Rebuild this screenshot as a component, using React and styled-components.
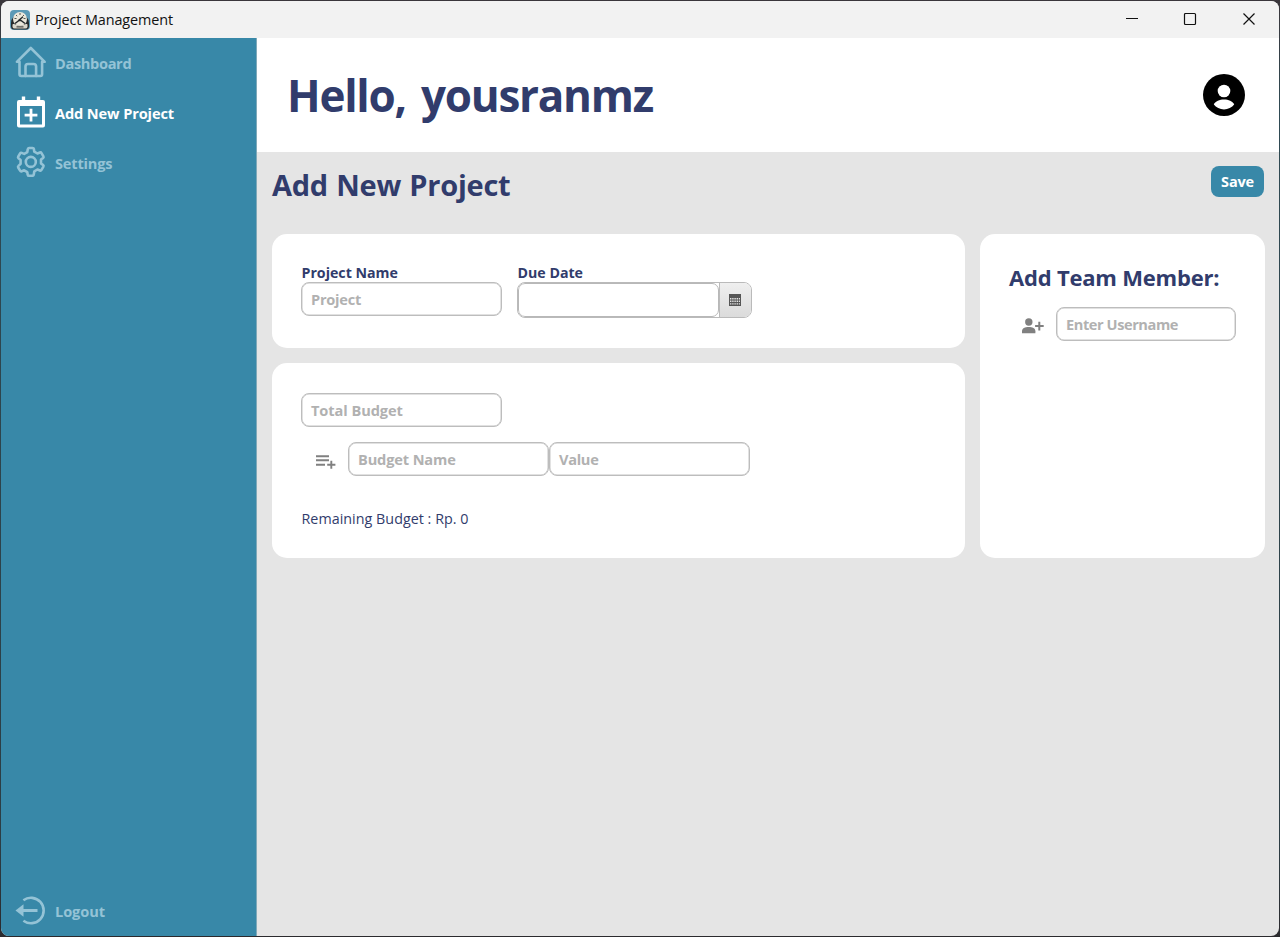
import React from "react";
import styled, { createGlobalStyle } from "styled-components";

const teal = "#3888a8";
const navy = "#313c6c";

const Global = createGlobalStyle`
  * { box-sizing: border-box; }
  html, body { margin: 0; padding: 0; background: #2e2c30; }
  body { font-family: "Open Sans", "Noto Sans", sans-serif; overflow: hidden; }
  svg { display: block; flex: none; }
`;

const Desktop = styled.div`
  width: 1280px;
  height: 937px;
  padding: 1px;
  background: linear-gradient(#3a363b, #2f4a53 12%, #2c3d44 90%, #2b2a2e);
`;
const Window = styled.div`
  display: flex;
  flex-direction: column;
  height: 935px;
  border-radius: 8px;
  overflow: hidden;
  background: #e5e5e5;
`;
const TitleBar = styled.header`
  display: flex;
  align-items: center;
  height: 37px;
  padding: 0 21px 0 9px;
  background: #f2f2f2;
`;
const WindowTitle = styled.span`
  margin-left: 5px;
  flex: 1;
  font-size: 14.4px;
  line-height: 20px;
  letter-spacing: -0.09px;
  color: #111;
`;
const WindowControls = styled.div`
  display: flex;
  gap: 42px;
  padding-bottom: 2px;
`;
const Body = styled.div`
  display: flex;
  flex: 1;
  min-height: 0;
`;
const Sidebar = styled.nav`
  display: flex;
  flex: none;
  flex-direction: column;
  width: 256px;
  background: ${teal};
  border-right: 1px solid #7fa9b9;
`;
const NavItem = styled.a`
  display: flex;
  align-items: center;
  height: 50px;
  padding-left: 14px;
  color: ${(p) => (p.$active ? "#fff" : "#94c3d6")};
  margin-top: ${(p) => (p.$last ? "auto" : 0)};
  svg { margin-bottom: 2px; }
`;
const NavLabel = styled.span`
  margin-left: 8px;
  font-size: 14.6px;
  font-weight: 700;
  line-height: 20px;
  letter-spacing: ${(p) => p.$track || 0}px;
`;
const Main = styled.main`
  flex: 1;
  display: flex;
  flex-direction: column;
`;
const Greeting = styled.section`
  display: flex;
  align-items: center;
  justify-content: space-between;
  height: 114px;
  padding: 0 34px 0 30px;
  background: #fff;
`;
const Heading = styled.h1`
  margin: 0;
  font-size: ${(p) => p.$size}px;
  font-weight: 700;
  line-height: ${(p) => p.$line}px;
  letter-spacing: ${(p) => p.$track || 0}px;
  word-spacing: ${(p) => p.$words || 0}px;
  color: ${navy};
  white-space: nowrap;
`;
const Content = styled.section`
  padding: 14px 14px 0 15px;
`;
const PageHead = styled.div`
  display: flex;
  align-items: flex-start;
  justify-content: space-between;
  height: 68px;
  padding-right: 1px;
`;
const SaveButton = styled.button`
  width: 53px;
  height: 31px;
  padding: 0 0 1px;
  border: 0;
  border-radius: 8px;
  background: ${teal};
  color: #fff;
  font: 700 14.5px/29px "Open Sans", sans-serif;
  letter-spacing: -0.2px;
`;
const Columns = styled.div`
  display: flex;
  gap: 15px;
  height: 324px;
`;
const Stack = styled.div`
  display: flex;
  flex: none;
  flex-direction: column;
  gap: 15px;
  width: 693px;
`;
const Card = styled.div`
  height: ${(p) => p.$height}px;
  flex: ${(p) => (p.$grow ? 1 : "none")};
  padding: 30px 29px;
  border-radius: 15px;
  background: #fff;
`;
const Row = styled.div`
  display: flex;
  align-items: flex-start;
  gap: ${(p) => p.$gap || 0}px;
  margin-top: ${(p) => p.$top || 0}px;
`;
const FieldGroup = styled.label`
  display: flex;
  flex-direction: column;
`;
const FieldLabel = styled.span`
  height: 18px;
  padding-left: 0.5px;
  font-size: 14.2px;
  font-weight: 700;
  line-height: 18px;
  color: ${navy};
`;
const Field = styled.div`
  width: ${(p) => p.$width || 201}px;
  height: 34px;
  padding-left: 9px;
  border: 1px solid #bdbdbd;
  box-shadow: inset 0 0 0 0.5px #c4c4c4;
  border-radius: 8px;
  background: #fff;
  color: #b1b1b1;
  font-size: 14.6px;
  font-weight: 700;
  line-height: 33px;
  letter-spacing: ${(p) => p.$track || 0}px;
  white-space: nowrap;
`;
const DatePicker = styled.div`
  display: flex;
  width: 235px;
  height: 36px;
  border: 1px solid #bababa;
  border-radius: 8px;
  background: #fff;
  overflow: hidden;
`;
const DateInput = styled.div`
  width: 201px;
  height: 34px;
  border: 1px solid #b8b8b8;
  border-radius: 7px;
  background: #fff;
`;
const DateButton = styled.div`
  display: flex;
  flex: 1;
  align-items: center;
  justify-content: center;
  padding-right: 2px;
  border-left: 1px solid #bbb;
  background: linear-gradient(#efefef, #dbdbdb);
`;
const IconSlot = styled.div`
  display: flex;
  align-items: center;
  justify-content: center;
  width: 47px;
  height: 34px;
  padding: ${(p) => p.$drop || 0}px 0 0 ${(p) => p.$shift || 0}px;
`;
const Remaining = styled.p`
  margin: 33px 0 0 0.5px;
  font-size: 14.3px;
  line-height: 20px;
  letter-spacing: 0.03px;
  color: ${navy};
`;

const AppIcon = () => (
  <svg width="20" height="20" viewBox="0 0 20 20">
    <rect width="20" height="20" rx="4" fill="#5b9ab6" />
    <path d="M1 13a9 9 0 1 1 18 0v4a3 3 0 0 1-3 2.500H4A3 3 0 0 1 1 17z" fill="#262b2c" />
    <circle cx="10" cy="9" r="7" fill="#e9e7db" />
    <path d="M10 3v2M4.500 8.500h2M13.500 8.500h2M6 5l1.200 1.200M14 5l-1.200 1.200" stroke="#55564f" strokeWidth="1" />
    <path d="M8.500 10.500 13 6.800M5 13.500l4-3 2 0 4 3" stroke="#22282a" strokeWidth="1.400" fill="none" />
    <path d="M2.500 14.500c2-1.500 3.500.8 5 .8h5c1.500 0 3-2.300 5-.8v2.500q-.5 1.500-2 1.500h-11q-1.500 0-2-1.500z" fill="#d8d6ca" />
    <path d="M6.500 16.800h7" stroke="#4b4d48" strokeWidth="1.200" />
  </svg>
);
const HomeIcon = () => (
  <svg width="32" height="32" viewBox="0 0 32 32" fill="none" stroke="currentColor" strokeWidth="2.600" strokeLinejoin="round" strokeLinecap="round">
    <path d="M1.900 15.800 15.800 2 29.700 15.800H27.100V28.300Q27.100 30 25.400 30H6.200Q4.500 30 4.500 28.300V15.800Z" />
    <path d="M10.500 30V20.500Q10.500 18 13 18H18.600Q21.100 18 21.100 20.500V30" />
  </svg>
);
const CalendarAddIcon = () => (
  <svg width="32" height="32" viewBox="0 0 32 32">
    <path fill="currentColor" fillRule="evenodd" d="M6.800 .5h3.400V4h11.600V.5h3.400V4H28a2 2 0 0 1 2 2v23.500a2 2 0 0 1-2 2H4a2 2 0 0 1-2-2V6a2 2 0 0 1 2-2h2.800zM5 10v18.500h22V10z" />
    <path fill="currentColor" d="M14.600 12.700h2.800v5h5v2.800h-5v5h-2.800v-5h-5v-2.800h5z" />
  </svg>
);
const GearIcon = () => (
  <svg width="32" height="32" viewBox="0 0 32 32" fill="none" stroke="currentColor" strokeWidth="2.600" strokeLinejoin="round">
    <path d="M14 2h3.600q1.100 0 1.300 1.100l.4 2.600 3.100 1.800 2.500-1q1-.4 1.600.6l1.900 3.200q.5.900-.3 1.600L26 13.600v3.800l2.100 1.700q.8.700.3 1.600l-1.900 3.200q-.6 1-1.600.6l-2.500-1-3.100 1.800-.4 2.600Q18.700 29.800 17.600 29.800H14q-1.100 0-1.300-1.100l-.4-2.600-3.100-1.800-2.500 1q-1 .4-1.600-.6l-1.900-3.200q-.5-.9.300-1.600L5.600 17.800V14L3.500 12.300q-.8-.7-.3-1.600l1.900-3.200q.6-1 1.600-.6l2.500 1 3.100-1.800.4-2.600Q12.900 2 14 2z" />
    <circle cx="15.800" cy="15.900" r="5" />
  </svg>
);
const LogoutIcon = () => (
  <svg width="32" height="32" viewBox="0 0 32 32">
    <path d="M8.400 6.300A12.700 12.700 0 1 1 8.400 26.700" fill="none" stroke="currentColor" strokeWidth="2.600" />
    <path d="M6 16.500H22.500" stroke="currentColor" strokeWidth="3" />
    <path d="M.5 16.500 8.500 10.200V22.800Z" fill="currentColor" />
  </svg>
);
const ProfileIcon = () => (
  <svg width="42" height="42" viewBox="0 0 42 42">
    <circle cx="21" cy="21" r="21" />
    <circle cx="21" cy="17" r="6.300" fill="#fff" />
    <path d="M10.800 30.600C12.500 27 16.500 25.500 21 25.500s8.500 1.500 10.200 5.100C29 33.700 25 35.500 21 35.500s-8-1.800-10.200-4.900z" fill="#fff" />
  </svg>
);
const CalendarIcon = () => (
  <svg width="12" height="12" viewBox="0 0 12 12" fill="#555">
    <path fillRule="evenodd" d="M0 0h12v12H0zM1 4v1.400h1.400V4zm2.200 0v1.400h1.400V4zm2.200 0v1.400h1.400V4zm2.200 0v1.400H9V4zm2.200 0v1.400h1.200V4zM1 6.600V8h1.400V6.600zm2.200 0V8h1.400V6.600zm2.200 0V8h1.400V6.600zm2.200 0V8H9V6.600zm2.200 0V8h1.200V6.600zM1 9.200v1.400h1.400V9.200zm2.200 0v1.400h1.400V9.200zm2.200 0v1.400h1.400V9.200zm2.200 0v1.400H9V9.200zm2.200 0v1.400h1.200V9.200z" />
  </svg>
);
const ListAddIcon = () => (
  <svg width="20" height="14" viewBox="0 0 20 14" fill="none" stroke="#808080" strokeWidth="1.900">
    <path d="M0 1.200h13M0 5.200h13M0 9.800h9M11.200 9.800h8.200M15.300 5.800v8" />
  </svg>
);
const UserAddIcon = () => (
  <svg width="22" height="16" viewBox="0 0 22 16" fill="#808080">
    <circle cx="6.800" cy="4" r="3.700" />
    <path d="M0 15.200v-2C0 10.200 3 9 6.700 9s6.700 1.200 6.700 4.200v2z" />
    <path d="M16.300 3.800h2v3.200h3.400v2h-3.400v3.400h-2V9h-3.200V7h3.200z" />
  </svg>
);

export default function App() {
  return (
    <>
      <Global />
      <Desktop>
        <Window>
          <TitleBar>
            <AppIcon />
            <WindowTitle>Project Management</WindowTitle>
            <WindowControls>
              <svg width="16" height="16" viewBox="0 0 16 16"><path d="M2 7.500h12" stroke="#111" /></svg>
              <svg width="16" height="16" viewBox="0 0 16 16"><rect x="2.500" y="2.500" width="11" height="11" rx="1" fill="none" stroke="#111" strokeWidth="1.200" /></svg>
              <svg width="18" height="16" viewBox="0 0 18 16"><path d="m3.500 2.500 11 11m0-11-11 11" stroke="#111" strokeWidth="1.200" /></svg>
            </WindowControls>
          </TitleBar>
          <Body>
            <Sidebar>
              <NavItem><HomeIcon /><NavLabel $track={-0.35}>Dashboard</NavLabel></NavItem>
              <NavItem $active><CalendarAddIcon /><NavLabel $track={-0.12}>Add New Project</NavLabel></NavItem>
              <NavItem><GearIcon /><NavLabel $track={-0.2}>Settings</NavLabel></NavItem>
              <NavItem $last><LogoutIcon /><NavLabel $track={-0.1}>Logout</NavLabel></NavItem>
            </Sidebar>
            <Main>
              <Greeting>
                <Heading $size={44} $line={60} $track={-1.25} $words={5}>Hello, yousranmz</Heading>
                <ProfileIcon />
              </Greeting>
              <Content>
                <PageHead>
                  <Heading as="h2" $size={29} $line={37} $track={-0.25} $words={1}>Add New Project</Heading>
                  <SaveButton>Save</SaveButton>
                </PageHead>
                <Columns>
                  <Stack>
                    <Card $height={114}>
                      <Row $gap={15}>
                        <FieldGroup>
                          <FieldLabel>Project Name</FieldLabel>
                          <Field $track={-0.25}>Project</Field>
                        </FieldGroup>
                        <FieldGroup>
                          <FieldLabel>Due Date</FieldLabel>
                          <DatePicker>
                            <DateInput />
                            <DateButton><CalendarIcon /></DateButton>
                          </DatePicker>
                        </FieldGroup>
                      </Row>
                    </Card>
                    <Card $height={195}>
                      <Field $track={-0.08}>Total Budget</Field>
                      <Row $top={15}>
                        <IconSlot $drop={5} $shift={2}><ListAddIcon /></IconSlot>
                        <Field $track={-0.14}>Budget Name</Field>
                        <Field $track={-0.3}>Value</Field>
                      </Row>
                      <Remaining>Remaining Budget : Rp. 0</Remaining>
                    </Card>
                  </Stack>
                  <Card $height={324} $grow>
                    <Heading as="h3" $size={22} $line={27} $track={-0.2}>Add Team Member:</Heading>
                    <Row $top={16}>
                      <IconSlot $drop={3}><UserAddIcon /></IconSlot>
                      <Field $width={180} $track={-0.43}>Enter Username</Field>
                    </Row>
                  </Card>
                </Columns>
              </Content>
            </Main>
          </Body>
        </Window>
      </Desktop>
    </>
  );
}
